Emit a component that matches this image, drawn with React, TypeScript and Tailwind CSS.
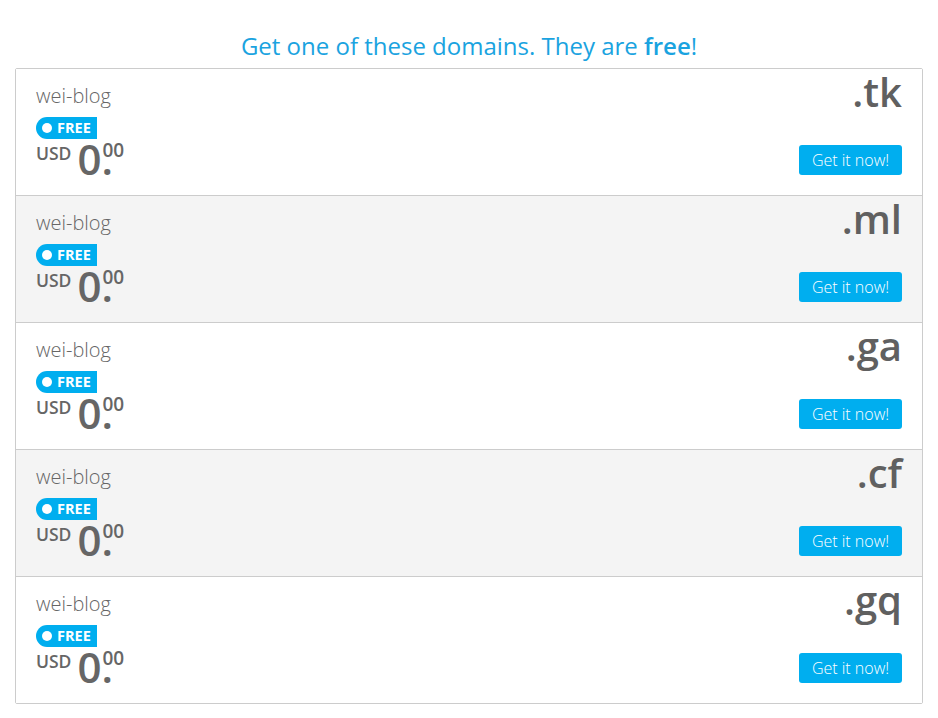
import React from "react";

const tlds = [".tk", ".ml", ".ga", ".cf", ".gq"];

export default function App() {
  return (
    <div className="min-h-[718px] bg-white px-[15px] pt-[29px]" style={{ fontFamily: '"Open Sans", sans-serif' }}>
      <h2 className="text-center text-[24px] leading-[33px] font-normal text-[#1aa3e0] mb-[6px]">
        Get one of these domains. They are <span className="font-semibold">free</span>!
      </h2>
      <div className="border border-[#cccccc] rounded-[2px]">
        {tlds.map((tld, i) => {
          const last = i === tlds.length - 1;
          return (
            <div
              key={tld}
              className={`flex justify-between px-[20px] ${last ? "h-[126px]" : "h-[127px] border-b border-[#cccccc]"} ${i % 2 === 1 ? "bg-[#f4f4f4]" : "bg-white"}`}
            >
              <div className="flex flex-col pt-[13px]">
                <div className="text-[20px] leading-[28px] font-light text-[#666666]">wei-blog</div>
                <div className="mt-[7px] flex items-center w-[61px] h-[22px] bg-[#00aeef] text-white rounded-l-full rounded-r-[3px] pl-[6px]">
                  <span className="w-[10px] h-[10px] rounded-full bg-white inline-block" />
                  <span className="ml-[5px] text-[14.5px] font-bold leading-none">FREE</span>
                </div>
                <div className="flex items-start text-[#666666] mt-[2px]">
                  <span className="text-[17.5px] font-semibold leading-none mt-[4px]">USD</span>
                  <span className="text-[42px] font-semibold leading-[36px] ml-[6px]">0</span>
                  <span className="text-[42px] font-semibold leading-[36px] inline-block w-0">.</span>
                  <span className="text-[19px] font-semibold leading-none mt-[0px] ml-[1px]">00</span>
                </div>
              </div>
              <div className="flex flex-col items-end justify-between pt-[3px] pb-[20px]">
                <div className="text-[40px] leading-[40px] font-semibold text-[#606060]">{tld}</div>
                <button className="h-[30px] w-[103px] bg-[#00aeef] text-white text-[16px] font-light rounded-[3px]">
                  Get it now!
                </button>
              </div>
            </div>
          );
        })}
      </div>
    </div>
  );
}
